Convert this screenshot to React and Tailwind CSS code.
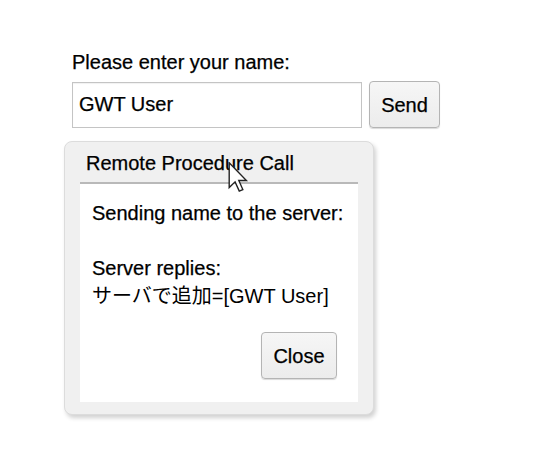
import React, { useState } from "react";

// arrow pointer sitting over the dialog caption, as in the capture
function Pointer() {
  return (
    <svg
      className="absolute left-[228px] top-[162px] pointer-events-none"
      width="21"
      height="31"
      viewBox="0 0 13 20"
    >
      <path
        d="M0.5 0.5 V16.5 L4.3 12.8 L7 18.8 L9.3 17.8 L6.7 11.9 H11.6 Z"
        fill="#fff"
        stroke="#222"
        strokeWidth="0.9"
        strokeLinejoin="miter"
      />
    </svg>
  );
}

export default function App() {
  const [name, setName] = useState("GWT User");

  const btn =
    "border border-[#b4b4b4] rounded-[4px] bg-gradient-to-b from-[#f6f6f6] to-[#ececec] shadow-[0_1px_1px_rgba(0,0,0,0.15)] text-[20px] text-black leading-none";

  return (
    <div className="relative w-[553px] h-[460px] bg-white font-['Liberation_Sans','Noto_Sans_CJK_JP',sans-serif] text-[20px] text-black overflow-hidden [-webkit-text-stroke:0.25px_#000]">
      <div className="pt-[50px] pl-[64px]">
        {/* name form */}
        <div className="ml-[8px]">
          <div className="leading-[24px]">Please enter your name:</div>
          <div className="flex items-center mt-[7px]">
            <input
              value={name}
              onChange={(e) => setName(e.target.value)}
              className="w-[290px] h-[46px] border border-[#c4c4c4] shadow-[inset_0_1px_1px_rgba(0,0,0,0.06)] px-[6px] text-[20px] text-black outline-none"
            />
            <button className={`${btn} ml-[7px] w-[71px] h-[47px]`}>Send</button>
          </div>
        </div>

        {/* dialog box */}
        <div className="mt-[13px] w-[310px] h-[274px] rounded-[8px] bg-[#f0f0f0] border border-[#dcdcdc] shadow-[2px_3px_4px_rgba(0,0,0,0.18)] pl-[15px] pr-[15px] pt-[9px] flex flex-col">
          <div className="px-[6px] leading-[24px] pb-[7px] border-b-2 border-[#b9b9b9] whitespace-nowrap">
            Remote Procedure Call
          </div>
          <div className="bg-white h-[218px] flex flex-col pl-[12px] pt-[17px] whitespace-nowrap">
            <div className="leading-[24px]">Sending name to the server:</div>
            <div className="leading-[24px] mt-[31px]">Server replies:</div>
            <div className="leading-[24px] mt-[4px] [-webkit-text-stroke:0px]">
              サーバで追加=[{name}]
            </div>
            <div className="flex justify-end mt-[24px] pr-[21px]">
              <button className={`${btn} w-[76px] h-[47px]`}>Close</button>
            </div>
          </div>
        </div>
      </div>
      <Pointer />
    </div>
  );
}
